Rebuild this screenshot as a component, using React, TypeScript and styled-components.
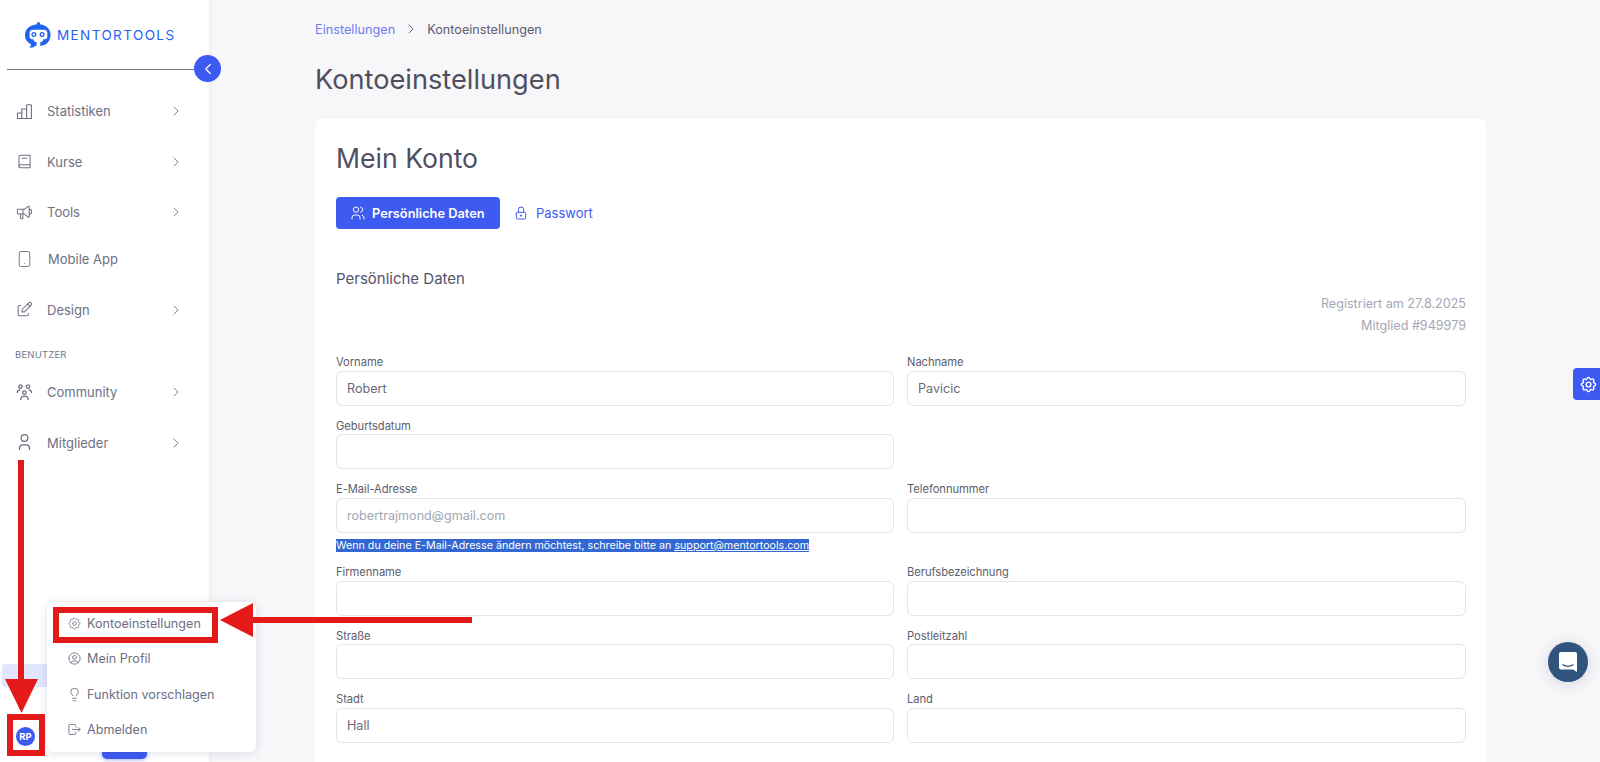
import React from "react";
import styled, { createGlobalStyle } from "styled-components";
import { ChevronLeft, ChevronRight, Lightbulb, Smartphone } from "lucide-react";
import {
  TbBook2,
  TbEdit,
  TbLock,
  TbLogout,
  TbSettings,
  TbSpeakerphone,
  TbUserCircle,
  TbUsers,
} from "react-icons/tb";

const BLUE = "#3d5af1";
const FONT = `"Inter", "Noto Sans", "Liberation Sans", sans-serif`;

const GlobalStyle = createGlobalStyle`
  html, body {
    margin: 0;
    height: 100%;
    overflow: hidden;
    background: #f7f7fa;
    font-family: ${FONT};
  }
  * { box-sizing: border-box; }
`;

const BarsIcon = () => (
  <svg width="19" height="19" viewBox="0 0 19 19" fill="none" stroke="currentColor" strokeWidth="1.1">
    <path d="M2.5 16.5 v-5.5 h4.3 v5.5 z M6.8 16.5 v-9.5 h4.8 v9.5 z M11.6 16.5 V3.5 a.8 .8 0 0 1 .8-.8 h3.2 a.8 .8 0 0 1 .8 .8 V16.5 z" />
  </svg>
);

const GroupIcon = () => (
  <svg width="19" height="19" viewBox="0 0 19 19" fill="none" stroke="currentColor" strokeWidth="1.3">
    <circle cx="5.5" cy="3.6" r="1.7" />
    <circle cx="13" cy="3.6" r="1.7" />
    <circle cx="9.4" cy="9.6" r="1.8" />
    <path d="M2.2 10 c0-2 1-3 2.8-3 M16.6 10 c0-2-1-3-2.8-3 M5.6 17 c0-2.4 1.4-3.8 3.8-3.8 s3.8 1.4 3.8 3.8" />
  </svg>
);

const PersonIcon = () => (
  <svg width="19" height="19" viewBox="0 0 19 19" fill="none" stroke="currentColor" strokeWidth="1.2">
    <circle cx="9.5" cy="5" r="3.4" />
    <path d="M4.5 17 v-1.6 c0-2.2 1.6-3.6 3.6-3.6 h2.8 c2 0 3.6 1.4 3.6 3.6 V17" />
  </svg>
);

const PhoneIcon = () => <Smartphone size={18} strokeWidth={1.2} />;
const BookIcon = () => <TbBook2 size={19} strokeWidth={1.3} />;
const MegaphoneIcon = () => <TbSpeakerphone size={19} strokeWidth={1.3} />;
const PenIcon = () => <TbEdit size={19} strokeWidth={1.3} />;

const navItems = [
  { label: "Statistiken", Icon: BarsIcon, more: true },
  { label: "Kurse", Icon: BookIcon, more: true },
  { label: "Tools", Icon: MegaphoneIcon, more: true },
  { label: "Mobile App", Icon: PhoneIcon, more: false },
  { label: "Design", Icon: PenIcon, more: true },
];

const userItems = [
  { label: "Community", Icon: GroupIcon, more: true },
  { label: "Mitglieder", Icon: PersonIcon, more: true },
];

const BulbIcon = () => <Lightbulb size={15} strokeWidth={1.4} />;
const GearIcon = () => <TbSettings size={15} strokeWidth={1.2} />;
const ProfileIcon = () => <TbUserCircle size={15} strokeWidth={1.4} />;
const LogoutIcon = () => <TbLogout size={15} strokeWidth={1.4} />;

const menuItems = [
  { label: "Kontoeinstellungen", Icon: GearIcon },
  { label: "Mein Profil", Icon: ProfileIcon },
  { label: "Funktion vorschlagen", Icon: BulbIcon },
  { label: "Abmelden", Icon: LogoutIcon },
];

const App = () => {
  return (
    <Page>
      <GlobalStyle />
      <Sidebar>
        <LogoRow>
          <svg width="28" height="27" viewBox="0 0 30 28">
            <path
              fill="#1f63f2"
              d="M14 1 h3 v2 c7 .6 11.5 5.6 11.5 11.6 0 6.6-5 11.4-11 11.6 v-4.2 c2 0 3.2-1 3.2-3 h1.6 c1.6 0 2.7-1 2.7-2.6 v-4 c0-2.2-1.6-3.4-3.6-3.4 H9.6 C7.6 8.9 6 10.2 6 12.4 v4 c0 1.6 1.1 2.6 2.7 2.6 h1.4 c.2 2 1.4 3 3.4 3 v4.2 c-.4 0-.8 0-1.2-.1 -1.4 1.6-4 2.2-6.6 1.9 1.2-1 1.7-2.2 1.7-3.6 C3.2 22.4 1 19 1 14.6 1 8.6 6 3.6 14 3 z"
            />
            <circle cx="10.6" cy="14" r="2" fill="none" stroke="#1f63f2" strokeWidth="1.4" />
            <circle cx="19.4" cy="14" r="2" fill="none" stroke="#1f63f2" strokeWidth="1.4" />
          </svg>
          <LogoText>MENTORTOOLS</LogoText>
        </LogoRow>
        <Divider />
        <CollapseButton>
          <ChevronLeft size={18} strokeWidth={1.6} color="#fff" />
        </CollapseButton>
        <Nav>
          {navItems.map(({ label, Icon, more }) => (
            <NavItem key={label} $compact={!more}>
              <Icon />
              <NavLabel $nudged={!more}>{label}</NavLabel>
              {more && <ChevronRight size={16} strokeWidth={1.3} />}
            </NavItem>
          ))}
          <NavHeading>BENUTZER</NavHeading>
          {userItems.map(({ label, Icon, more }) => (
            <NavItem key={label}>
              <Icon />
              <NavLabel>{label}</NavLabel>
              {more && <ChevronRight size={16} strokeWidth={1.3} />}
            </NavItem>
          ))}
        </Nav>
        <ActiveStrip />
        <UpgradeButton />
        <Avatar>RP</Avatar>
      </Sidebar>

      <Main>
        <Breadcrumb>
          <CrumbLink>Einstellungen</CrumbLink>
          <ChevronRight size={16} strokeWidth={1.4} color="#5d5d6e" />
          <span>Kontoeinstellungen</span>
        </Breadcrumb>
        <PageTitle>Kontoeinstellungen</PageTitle>
        <Card>
          <CardTitle>Mein Konto</CardTitle>
          <Tabs>
            <PrimaryTab>
              <TbUsers size={16} strokeWidth={1.5} />
              Persönliche Daten
            </PrimaryTab>
            <LinkTab>
              <TbLock size={16} strokeWidth={1.5} />
              Passwort
            </LinkTab>
          </Tabs>
          <SectionTitle>Persönliche Daten</SectionTitle>
          <MetaBlock>
            <div>Registriert am 27.8.2025</div>
            <div>Mitglied #949979</div>
          </MetaBlock>
          <FormGrid>
            <Field>
              <FieldLabel>Vorname</FieldLabel>
              <TextInput readOnly value="Robert" />
            </Field>
            <Field>
              <FieldLabel>Nachname</FieldLabel>
              <TextInput readOnly value="Pavicic" />
            </Field>
            <Field>
              <FieldLabel>Geburtsdatum</FieldLabel>
              <TextInput readOnly value="" />
            </Field>
            <div />
            <Field>
              <FieldLabel>E-Mail-Adresse</FieldLabel>
              <TextInput readOnly disabled value="robertrajmond@gmail.com" />
              <Hint>
                <Selected>
                  Wenn du deine E-Mail-Adresse ändern möchtest, schreibe bitte an{" "}
                  <u>support@mentortools.com</u>{" "}
                </Selected>
              </Hint>
            </Field>
            <Field>
              <FieldLabel>Telefonnummer</FieldLabel>
              <TextInput readOnly value="" />
            </Field>
            <Field>
              <FieldLabel>Firmenname</FieldLabel>
              <TextInput readOnly value="" />
            </Field>
            <Field>
              <FieldLabel>Berufsbezeichnung</FieldLabel>
              <TextInput readOnly value="" />
            </Field>
            <Field>
              <FieldLabel>Straße</FieldLabel>
              <TextInput readOnly value="" />
            </Field>
            <Field>
              <FieldLabel>Postleitzahl</FieldLabel>
              <TextInput readOnly value="" />
            </Field>
            <Field>
              <FieldLabel>Stadt</FieldLabel>
              <TextInput readOnly value="Hall" />
            </Field>
            <Field>
              <FieldLabel>Land</FieldLabel>
              <TextInput readOnly value="" />
            </Field>
          </FormGrid>
        </Card>
      </Main>

      <UserMenu>
        {menuItems.map(({ label, Icon }) => (
          <MenuItem key={label}>
            <Icon />
            {label}
          </MenuItem>
        ))}
      </UserMenu>

      <SettingsTab>
        <TbSettings size={19} strokeWidth={1.8} />
      </SettingsTab>

      <ChatBubble>
        <svg width="20" height="22" viewBox="0 0 20 22">
          <path
            fill="#fff"
            d="M3 1 h14 a2 2 0 0 1 2 2 v18 l-4-2.6 H3 a2 2 0 0 1-2-2 V3 a2 2 0 0 1 2-2 z"
          />
          <path d="M4.5 13.5 c3.5 2.4 7.5 2.4 11 0" fill="none" stroke="#31547e" strokeWidth="1.3" />
        </svg>
      </ChatBubble>

      <Annotations viewBox="0 0 1600 762">
        <g fill="none" stroke="#e41a1a" strokeWidth="6">
          <rect x="56" y="610" width="159" height="30" />
          <rect x="10" y="717" width="32" height="36" />
        </g>
        <g fill="#e41a1a">
          <rect x="18" y="460" width="6" height="222" />
          <path d="M5 679 H38 L21.5 713 z" />
          <rect x="250" y="617" width="222" height="6" />
          <path d="M220 620 L253 603 V637 z" />
        </g>
      </Annotations>
    </Page>
  );
};

export default App;

const Page = styled.div`
  position: relative;
  display: flex;
  width: 100%;
  height: 100vh;
  overflow: hidden;
`;

const Sidebar = styled.aside`
  position: relative;
  flex: 0 0 209px;
  height: 100%;
  background: #fff;
  box-shadow: 1px 0 6px rgba(40, 40, 70, 0.05);
  display: flex;
  flex-direction: column;
`;

const LogoRow = styled.div`
  display: flex;
  align-items: center;
  gap: 5px;
  height: 69px;
  padding-left: 24px;
  color: #1f63f2;
`;

const LogoText = styled.span`
  font-size: 13.5px;
  font-weight: 400;
  letter-spacing: 1.4px;
`;

const Divider = styled.div`
  height: 1px;
  margin: 0 15px 0 7px;
  background: #77778a;
`;

const CollapseButton = styled.div`
  position: absolute;
  top: 55px;
  left: 194px;
  width: 27px;
  height: 27px;
  border-radius: 50%;
  background: ${BLUE};
  display: flex;
  align-items: center;
  justify-content: center;
  z-index: 2;
`;

const Nav = styled.nav`
  margin-top: 16px;
  display: flex;
  flex-direction: column;
`;

const NavItem = styled.div<{ $compact?: boolean }>`
  display: flex;
  align-items: center;
  height: ${(p) => (p.$compact ? "47px" : "50.5px")};
  padding: ${(p) => (p.$compact ? "0 0 4px 15px" : "0 0 0 15px")};
  color: #6d7083;

  > svg:first-child {
    flex: 0 0 19px;
  }

  > svg:last-child:not(:first-child) {
    margin-left: auto;
    margin-right: 25px;
  }
`;

const NavLabel = styled.span<{ $nudged?: boolean }>`
  margin-left: ${(p) => (p.$nudged ? "14px" : "13px")};
  font-size: 13px;
`;

const NavHeading = styled.div`
  padding: 13px 0 6px 15px;
  font-size: 9.5px;
  line-height: 13px;
  letter-spacing: 0.2px;
  color: #74778a;
`;

const ActiveStrip = styled.div`
  position: absolute;
  left: 2px;
  top: 664px;
  width: 120px;
  height: 23px;
  border-radius: 4px;
  background: #e2e6fc;
`;

const UpgradeButton = styled.div`
  position: absolute;
  left: 102px;
  top: 735px;
  width: 45px;
  height: 24px;
  border-radius: 5px;
  background: ${BLUE};
  box-shadow: 0 1px 4px rgba(61, 90, 241, 0.45);
`;

const Avatar = styled.div`
  position: absolute;
  left: 16px;
  top: 727px;
  width: 19px;
  height: 19px;
  border-radius: 50%;
  background: ${BLUE};
  color: #fff;
  font-size: 9.5px;
  font-weight: 700;
  display: flex;
  align-items: center;
  justify-content: center;
`;

const Main = styled.main`
  flex: 1;
  min-width: 0;
  padding: 20px 114px 0 106px;
`;

const Breadcrumb = styled.div`
  display: flex;
  align-items: center;
  gap: 8px;
  height: 18px;
  font-size: 12.7px;
  color: #5d5d6e;
`;

const CrumbLink = styled.span`
  color: #6f7cf0;
`;

const PageTitle = styled.h1`
  margin: 25px 0 0;
  font-size: 27.2px;
  line-height: 34px;
  font-weight: 400;
  color: #4f4f60;
`;

const Card = styled.section`
  margin-top: 22px;
  height: 800px;
  padding: 20px 20px 20px 21px;
  border-radius: 6px;
  background: #fff;
`;

const CardTitle = styled.h2`
  margin: 0;
  font-size: 26.6px;
  line-height: 38px;
  font-weight: 400;
  color: #4f4f60;
`;

const Tabs = styled.div`
  display: flex;
  align-items: center;
  margin-top: 20px;
  gap: 13px;
`;

const PrimaryTab = styled.div`
  display: flex;
  align-items: center;
  gap: 6px;
  width: 164px;
  height: 32px;
  padding-left: 14px;
  border-radius: 4px;
  background: ${BLUE};
  color: #fff;
  font-size: 12.8px;
  font-weight: 600;
`;

const LinkTab = styled.div`
  display: flex;
  align-items: center;
  gap: 7px;
  color: ${BLUE};
  font-size: 13px;
`;

const SectionTitle = styled.h3`
  margin: 40px 0 0;
  font-size: 15px;
  line-height: 20px;
  font-weight: 400;
  color: #55556a;
`;

const MetaBlock = styled.div`
  margin-top: 4px;
  text-align: right;
  font-size: 12.6px;
  line-height: 22px;
  color: #a4a6b4;
`;

const FormGrid = styled.div`
  display: grid;
  grid-template-columns: 558px 559px;
  justify-content: space-between;
  align-items: start;
  row-gap: 10px;
  margin-top: 15px;
`;

const Field = styled.div`
  display: flex;
  flex-direction: column;
`;

const FieldLabel = styled.label`
  padding-top: 2px;
  font-size: 11.2px;
  line-height: 16.5px;
  letter-spacing: -0.05px;
  color: #5d5d6e;
`;

const TextInput = styled.input`
  width: 100%;
  height: 35px;
  padding: 0 10px;
  border: 1px solid #e4e4e9;
  border-radius: 6px;
  background: #fff;
  outline: none;
  font-family: inherit;
  font-size: 12.6px;
  color: #6a6a7c;

  &:disabled {
    color: #a4a6b4;
  }
`;

const Hint = styled.div`
  margin-top: 6.5px;
  height: 13px;
  font-size: 10.7px;
  line-height: 13.5px;
  white-space: nowrap;
`;

const Selected = styled.span`
  background: #3367d1;
  color: #fff;
`;

const UserMenu = styled.div`
  position: absolute;
  left: 47px;
  top: 602px;
  width: 209px;
  height: 150px;
  padding-top: 4px;
  border-radius: 6px;
  background: #fff;
  box-shadow: 0 1px 8px rgba(40, 40, 70, 0.14);
  z-index: 3;
`;

const MenuItem = styled.div`
  display: flex;
  align-items: center;
  gap: 5px;
  height: 35.3px;
  padding-left: 20px;
  font-size: 12.6px;
  color: #6d7083;
`;

const SettingsTab = styled.div`
  position: absolute;
  right: 0;
  top: 368px;
  width: 27px;
  height: 32px;
  padding-left: 3px;
  border-radius: 4px 0 0 4px;
  background: ${BLUE};
  color: #fff;
  display: flex;
  align-items: center;
  justify-content: center;
`;

const ChatBubble = styled.div`
  position: absolute;
  left: 1548px;
  top: 642px;
  width: 40px;
  height: 40px;
  border-radius: 50%;
  background: #31547e;
  box-shadow: 0 2px 14px rgba(40, 40, 70, 0.16);
  display: flex;
  align-items: center;
  justify-content: center;
`;

const Annotations = styled.svg`
  position: absolute;
  left: 0;
  top: 0;
  width: 1600px;
  height: 762px;
  pointer-events: none;
  z-index: 4;
`;
